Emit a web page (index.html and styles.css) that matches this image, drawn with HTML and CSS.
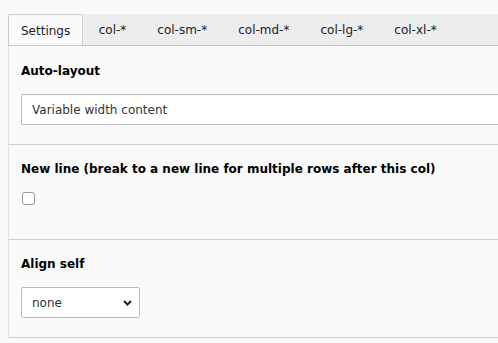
FILE: index.html
```html
<!DOCTYPE html>
<html lang="en">
<head>
    <meta charset="UTF-8">
    <meta name="viewport" content="width=device-width, initial-scale=1.0">
    <title>Column settings</title>
    <link rel="stylesheet" href="styles.css">
</head>
<body>
    <div class="form">
        <div class="tabs">
            <div class="tab active">Settings</div>
            <div class="tab">col-*</div>
            <div class="tab">col-sm-*</div>
            <div class="tab">col-md-*</div>
            <div class="tab">col-lg-*</div>
            <div class="tab">col-xl-*</div>
        </div>

        <div class="panel">
            <div class="section first">
                <label class="label">Auto-layout</label>
                <input class="text-input" type="text" value="Variable width content">
            </div>

            <div class="section">
                <label class="label">New line (break to a new line for multiple rows after this col)</label>
                <div class="check-row">
                    <input class="checkbox" type="checkbox">
                </div>
            </div>

            <div class="section">
                <label class="label">Align self</label>
                <div class="select-wrap">
                    <select class="select">
                        <option>none</option>
                    </select>
                    <svg class="chevron" width="9" height="6" viewBox="0 0 9 6">
                        <path d="M1 1 L4.5 4.5 L8 1" fill="none" stroke="#222" stroke-width="2"/>
                    </svg>
                </div>
            </div>
        </div>
    </div>
</body>
</html>
```

FILE: styles.css
```css
 body {
     background-color: #fafafa;
     margin: 0;
     padding: 14px 0 0 8px;
     font-family: "DejaVu Sans", Verdana, sans-serif;
     font-size: 12px;
     color: #000;
 }
 .tabs {
     display: flex;
     background-color: #ededed;
     border-bottom: 1px solid #c8c8c8;
     height: 31px;
 }
 .tab {
     display: flex;
     align-items: center;
     padding: 0 15.5px;
     color: #212121;
 }
 .tab.active {
     padding: 1px 12px 0;
     background-color: #fafafa;
     border: 1px solid #cdcdcd;
     border-bottom: none;
     border-radius: 2px 2px 0 0;
     margin-bottom: -1px;
     height: 31px;
     box-sizing: border-box;
 }
 .panel {
     border-left: 1px solid #dedede;
 }
 .section {
     padding: 15px 0 19px 12px;
     border-bottom: 1px solid #cfcfcf;
 }
 .section.first {
     padding-top: 16px;
 }
 .label {
     display: block;
     font-weight: bold;
     line-height: 18px;
     margin-bottom: 14px;
 }
 .text-input {
     display: block;
     width: 100%;
     height: 31px;
     box-sizing: border-box;
     border: 1px solid #bbb;
     border-right: none;
     border-radius: 2px 0 0 2px;
     background: #fff;
     padding: 0 10px;
     font: 12px "DejaVu Sans", Verdana, sans-serif;
     color: #333;
 }
 .check-row {
     height: 28px;
 }
 .checkbox {
     appearance: none;
     display: block;
     width: 13px;
     height: 13px;
     margin: 6px 0 0 1px;
     border: 1px solid #999;
     border-radius: 3px;
     background: #fff;
     box-sizing: border-box;
 }
 .select-wrap {
     position: relative;
     width: 119px;
 }
 .select {
     appearance: none;
     display: block;
     width: 119px;
     height: 31px;
     border: 1px solid #bbb;
     border-radius: 2px;
     background: #fff;
     padding: 0 10px;
     font: 12px "DejaVu Sans", Verdana, sans-serif;
     color: #333;
 }
 .chevron {
     position: absolute;
     right: 8px;
     top: 13px;
 }
```
